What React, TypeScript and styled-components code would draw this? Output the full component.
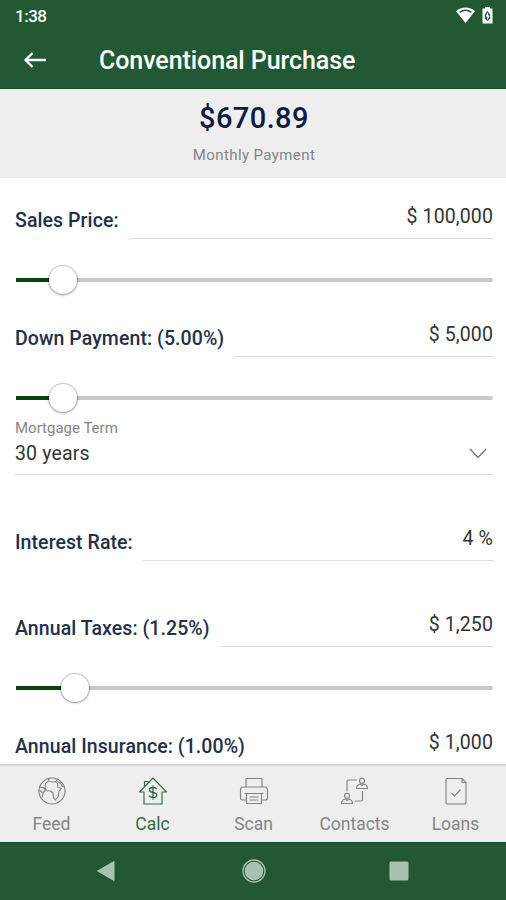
import React from 'react';
import styled, { createGlobalStyle } from 'styled-components';

const GlobalStyle = createGlobalStyle`
  * { box-sizing: border-box; }
  body { margin: 0; background: #fff; font-family: Roboto, "Noto Sans", sans-serif; }
`;

const Screen = styled.div`
  width: 506px;
  height: 900px;
  display: flex;
  flex-direction: column;
  overflow: hidden;
  background: #fff;
`;

const Header = styled.header`
  flex: none;
  height: 89px;
  background: #235834;
  border-bottom: 1px solid #0f4a1e;
  color: #fff;
`;

const StatusBar = styled.div`
  display: flex;
  align-items: center;
  justify-content: space-between;
  height: 32px;
  padding: 0 13px 0 15px;
`;

const Clock = styled.span`
  font-size: 17px;
  font-weight: 500;
  line-height: 32px;
  letter-spacing: -0.5px;
`;

const StatusIcons = styled.div`
  display: flex;
  align-items: center;
  gap: 7px;
  margin-top: -2px;
`;

const TitleBar = styled.div`
  display: flex;
  align-items: center;
  height: 56px;
  padding-left: 23px;
`;

const Title = styled.h1`
  margin: 2px 0 0 52px;
  font-size: 25px;
  font-weight: 500;
  line-height: 56px;
  letter-spacing: -0.08px;
`;

const Summary = styled.section`
  flex: none;
  height: 89px;
  padding-left: 2px;
  background: #eeeeee;
  text-align: center;
`;

const Amount = styled.div`
  padding-top: 12px;
  font-size: 29px;
  font-weight: 500;
  line-height: 34px;
  letter-spacing: 0.4px;
  color: #101b3f;
`;

const AmountCaption = styled.div`
  margin-top: 11px;
  font-size: 15px;
  line-height: 18px;
  letter-spacing: 0.4px;
  color: #858585;
`;

const Form = styled.main`
  flex: 1;
  min-height: 0;
  overflow: hidden;
  padding: 0 13px 0 15px;
`;

const Field = styled.div<{ $gap: number }>`
  display: flex;
  gap: 10px;
  height: 44px;
  margin-top: ${(p) => p.$gap}px;
`;

const Label = styled.label`
  padding-top: 14px;
  font-size: 19.5px;
  font-weight: 500;
  line-height: 24px;
  letter-spacing: 0.08px;
  white-space: nowrap;
  color: #23304a;
`;

const Value = styled.div`
  flex: 1;
  padding-top: 10px;
  border-bottom: 1px solid #dedede;
  text-align: right;
  font-size: 19.5px;
  line-height: 24px;
  letter-spacing: 0.12px;
  color: #333;
`;

const SliderBox = styled.div`
  display: flex;
  align-items: center;
  height: 32px;
  margin: 25px 0 0 1px;
`;

const Filled = styled.div<{ $width: number }>`
  width: ${(p) => p.$width}px;
  height: 4px;
  background: #07430f;
`;

const Thumb = styled.div`
  flex: none;
  width: 28px;
  height: 28px;
  margin: 0 -1px;
  border-radius: 50%;
  background: #fff;
  box-shadow: 0 0 1px 1px rgba(0, 0, 0, 0.2), 0 1px 3px rgba(0, 0, 0, 0.3);
  z-index: 1;
`;

const Track = styled.div`
  flex: 1;
  height: 4px;
  border-radius: 0 2px 2px 0;
  background: #c8c8c8;
`;

const Select = styled.div`
  height: 61px;
  border-bottom: 1px solid #d9d9d9;
`;

const SelectLabel = styled.div`
  padding-top: 5px;
  font-size: 15px;
  line-height: 18px;
  color: #858585;
`;

const SelectRow = styled.div`
  display: flex;
  align-items: center;
  justify-content: space-between;
  height: 24px;
  margin-top: 4px;
  padding-right: 6px;
  font-size: 19.5px;
  letter-spacing: 0.15px;
  color: #333;
`;

const Tabs = styled.nav`
  flex: none;
  display: flex;
  height: 78px;
  padding-left: 1px;
  background: #eeeeee;
  border-top: 2px solid #d4d4d4;
`;

const Tab = styled.a<{ $active?: boolean }>`
  flex: 1;
  display: flex;
  flex-direction: column;
  align-items: center;
  padding-top: 10px;
  font-size: 17.5px;
  line-height: 22px;
  color: ${(p) => (p.$active ? '#366a47' : '#858585')};

  svg { display: block; margin-bottom: 7px; }
`;

const SystemNav = styled.footer`
  flex: none;
  display: flex;
  align-items: center;
  justify-content: space-between;
  height: 58px;
  padding: 0 97px 2px 96px;
  background: #235834;
  border-top: 1px solid #0f4a1e;
`;

const HomeIcon = styled.svg`
  margin-left: 3px;
`;

interface IconProps {
  children: React.ReactNode;
}

const TabIcon = ({ children }: IconProps) => (
  <svg width="30" height="30" viewBox="0 0 30 30" fill="none" stroke="currentColor" strokeWidth="1.15" strokeLinejoin="round">
    {children}
  </svg>
);

const Slider = ({ filled }: { filled: number }) => (
  <SliderBox>
    <Filled $width={filled} />
    <Thumb />
    <Track />
  </SliderBox>
);

interface FormFieldProps {
  label: string;
  value: string;
  gap: number;
}

const FormField = ({ label, value, gap }: FormFieldProps) => (
  <Field $gap={gap}>
    <Label>{label}</Label>
    <Value>{value}</Value>
  </Field>
);

const tabs = [
  {
    label: 'Feed',
    icon: (
      <>
        <circle cx="15" cy="15" r="13" />
        <path d="M8.500 7.500l3-2.500 4 1 3-.5 2 2.500.5 3.500 3.300.8-2.600 4-.4 4.200-3 3.500-1.800-2.500-.5-4.500-2.500-2-3.500-.3-2-2.500zM2.500 11l4 .5 1.800 3-2 2-1.300 5M2.300 14l3 2.500M19 3.500l1.500 2 3 1.500 1.500 3 2 1M13 2.300l-2 1.500" />
      </>
    ),
  },
  {
    label: 'Calc',
    active: true,
    icon: (
      <>
        <path d="M1.500 16L15 2l13.500 14H24v12H6V16H1.500zM6.500 10.800V5.500h3.500v1.700" />
        <path d="M18.700 13.200c-.6-1.200-1.900-1.700-3.700-1.700-2.200 0-3.600.8-3.600 2.400 0 3.400 7.400 1.800 7.400 5.100 0 1.600-1.500 2.500-3.800 2.500-1.900 0-3.300-.6-4-1.800M15 9.500v14" strokeWidth="1.300" />
      </>
    ),
  },
  {
    label: 'Scan',
    icon: (
      <>
        <path d="M7 11V2.500h16V11M7 24H3.500C2 24 1.500 23 1.500 22v-8c0-1.500 1-3 2.500-3h22c1.500 0 2.500 1.500 2.500 3v8c0 1-.5 2-2 2H23" />
        <path d="M7.500 17.500h15v10h-15zM5.500 17.500h19M10.500 21h9M10.500 24h9" />
      </>
    ),
  },
  {
    label: 'Contacts',
    icon: (
      <>
        <path d="M7 15.500V5.500q0-1.500 1.500-1.500H17M22.500 15v8.500q0 1.500-1.500 1.500h-6" />
        <circle cx="22" cy="4.700" r="2.500" />
        <path d="M16.500 12.500c0-3 1.800-4.500 5.500-4.500s5.500 1.500 5.500 4.500h-11zM20.500 8.200l1.500 1.500 1.500-1.500" />
        <circle cx="7" cy="19.700" r="2.500" />
        <path d="M1.500 27.500c0-3 1.800-4.500 5.500-4.500s5.500 1.500 5.500 4.500h-11zM5.500 23.200L7 24.700l1.500-1.500" />
      </>
    ),
  },
  {
    label: 'Loans',
    icon: (
      <>
        <path d="M6.500 2.500h14.500L25 6.500v19.500a2 2 0 0 1-2 2H6.500a1.500 1.500 0 0 1-1.500-1.500V4a1.500 1.500 0 0 1 1.500-1.500zM21 2.500v4h4M10.500 17l3 3.200 6-6.700" />
      </>
    ),
  },
];

export default function App() {
  return (
    <>
      <GlobalStyle />
      <Screen>
        <Header>
          <StatusBar>
            <Clock>1:38</Clock>
            <StatusIcons>
              <svg width="19" height="17" viewBox="0 0 19 17">
                <path d="M0 4.200C5.500-.7 13.500-.7 19 4.200L9.500 16z" fill="#fff" />
                <path d="M3.600 5.300c3.700-2.500 8.100-2.500 11.800 0" fill="none" stroke="#235834" strokeWidth="1.500" />
              </svg>
              <svg width="11" height="17" viewBox="0 0 11 17">
                <path d="M3 0h5v1.500h2.500v15H.5v-15H3z" fill="#fff" />
                <path d="M5.500 3.800L2.800 7.500v4l2.700 2.800 2.700-2.800v-4z" fill="#235834" />
                <path d="M6.300 4.500L3.500 9.500h1.800v4l2.500-5H6z" fill="#fff" />
              </svg>
            </StatusIcons>
          </StatusBar>
          <TitleBar>
            <svg width="24" height="18" viewBox="0 0 24 18" fill="none" stroke="#fff" strokeWidth="2.300">
              <path d="M23 9H2.500M9.500 2L2.500 9l7 7" />
            </svg>
            <Title>Conventional Purchase</Title>
          </TitleBar>
        </Header>
        <Summary>
          <Amount>$670.89</Amount>
          <AmountCaption>Monthly Payment</AmountCaption>
        </Summary>
        <Form>
          <FormField label="Sales Price:" value="$ 100,000" gap={17} />
          <Slider filled={34} />
          <FormField label="Down Payment: (5.00%)" value="$ 5,000" gap={17} />
          <Slider filled={34} />
          <Select>
            <SelectLabel>Mortgage Term</SelectLabel>
            <SelectRow>
              <span>30 years</span>
              <svg width="18" height="11" viewBox="0 0 18 11" fill="none" stroke="#777" strokeWidth="1.300">
                <path d="M1 1l8 8.500L17 1" />
              </svg>
            </SelectRow>
          </Select>
          <FormField label="Interest Rate:" value="4 %" gap={42} />
          <FormField label="Annual Taxes: (1.25%)" value="$ 1,250" gap={42} />
          <Slider filled={46} />
          <FormField label="Annual Insurance: (1.00%)" value="$ 1,000" gap={17} />
        </Form>
        <Tabs>
          {tabs.map((tab) => (
            <Tab key={tab.label} $active={tab.active}>
              <TabIcon>{tab.icon}</TabIcon>
              {tab.label}
            </Tab>
          ))}
        </Tabs>
        <SystemNav>
          <svg width="19" height="22" viewBox="0 0 19 22">
            <path d="M18 1.500v19L1.500 11z" fill="#a9c2b0" stroke="#a9c2b0" strokeLinejoin="round" />
          </svg>
          <HomeIcon width="24" height="24" viewBox="0 0 24 24">
            <circle cx="12" cy="12" r="9.300" fill="#a9c2b0" />
            <circle cx="12" cy="12" r="11" fill="none" stroke="#a9c2b0" strokeWidth="1.300" />
          </HomeIcon>
          <svg width="20" height="20" viewBox="0 0 20 20">
            <rect x="0.500" y="0.500" width="19" height="19" rx="1.500" fill="#a9c2b0" />
          </svg>
        </SystemNav>
      </Screen>
    </>
  );
}
